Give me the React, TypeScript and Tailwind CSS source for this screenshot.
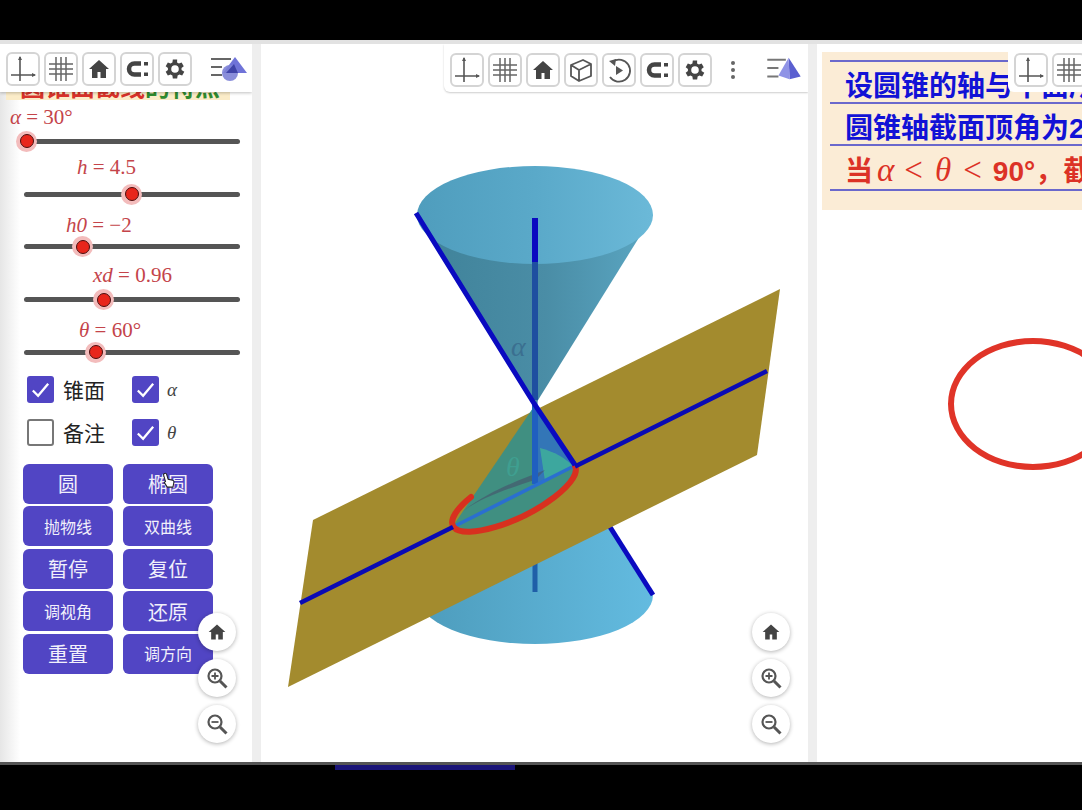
import React from "react";

const cjk = "font-['Liberation_Sans','Noto_Sans_CJK_SC',sans-serif]";
const serif = "font-['Liberation_Serif','DejaVu_Serif',serif]";

const AxesIcon = () => (
  <svg viewBox="0 0 30 30" className="w-[30px] h-[30px]" fill="none" stroke="#555" strokeWidth="1.6">
    <path d="M12 3v24M3 21h24" />
    <path d="M12 2l-2 4h4zM28 21l-4-2v4z" fill="#555" stroke="none" />
  </svg>
);

const GridIcon = () => (
  <svg viewBox="0 0 30 30" className="w-[30px] h-[30px]" fill="none" stroke="#666" strokeWidth="1.5">
    <path d="M10 3v24M15 3v24M20 3v24M3 10h24M3 15h24M3 20h24" />
  </svg>
);

const HomeIcon = ({ size = 24 }: { size?: number }) => (
  <svg viewBox="0 0 24 24" width={size} height={size} fill="#444">
    <path d="M12 3L2 12h3v9h5.500v-6h3v6H19v-9h3z" />
  </svg>
);

const MagnetIcon = () => (
  <svg viewBox="0 0 30 30" className="w-[30px] h-[30px]" fill="none" stroke="#444">
    <path d="M19 9.500h-6.500a5.500 5.500 0 000 11H19" strokeWidth="4.500" />
    <path d="M22 8h4v3.500h-4zM22 18.500h4V22h-4z" fill="#444" stroke="none" />
  </svg>
);

const GearIcon = () => (
  <svg viewBox="0 0 24 24" className="w-[26px] h-[26px]" fill="#444">
    <path d="M19.400 13a7.500 7.500 0 000-2l2.100-1.600-2-3.500-2.500 1a7.500 7.500 0 00-1.700-1L15.400 3.200h-4L11 5.900a7.500 7.500 0 00-1.700 1l-2.500-1-2 3.500L6.900 11a7.500 7.500 0 000 2l-2.100 1.600 2 3.500 2.500-1a7.500 7.500 0 001.700 1l.4 2.700h4l.4-2.700a7.500 7.500 0 001.700-1l2.500 1 2-3.500zM13.400 15.500a3.500 3.500 0 110-7 3.500 3.500 0 010 7z" transform="translate(-1.400 0)" />
  </svg>
);

const CubeIcon = () => (
  <svg viewBox="0 0 30 30" className="w-[30px] h-[30px]" fill="none" stroke="#555" strokeWidth="1.800" strokeLinejoin="round">
    <path d="M5 10l12-5 8 4v12l-12 5-8-5zM5 10l8 5v11M13 15l12-6" />
  </svg>
);

const RotateIcon = () => (
  <svg viewBox="0 0 30 30" className="w-[30px] h-[30px]" fill="none" stroke="#555" strokeWidth="1.800">
    <path d="M9 6.500A11 11 0 1 1 6 22" />
    <path d="M5 6l7-2-1 7z" fill="#555" stroke="none" />
    <path d="M12 11l7 4.500-7 4.500z" fill="#555" stroke="none" />
  </svg>
);

const ToolBtn = ({ children }: { children: React.ReactNode }) => (
  <div className="w-[34px] h-[34px] shrink-0 flex items-center justify-center bg-white rounded-md border-2 border-[#d4d4d4]">
    {children}
  </div>
);

const Shapes2D = () => (
  <svg viewBox="0 0 38 28" className="w-[38px] h-[28px]">
    <path d="M1 4h20M1 12h11M1 20h11" stroke="#666" strokeWidth="2" fill="none" />
    <path d="M25 2l12 16H13z" fill="#6f73d8" />
    <circle cx="20" cy="18" r="8" fill="#7d82d6" opacity="0.9" />
    <path d="M24 9l4 9H16z" fill="#3f43a8" />
  </svg>
);

const Pyramid = () => (
  <svg viewBox="0 0 38 28" className="w-[36px] h-[26px]">
    <path d="M1 4h20M1 13h12M1 22h12" stroke="#777" strokeWidth="2.200" fill="none" />
    <path d="M24 2l13 20-12 3z" fill="#5a5fd0" />
    <path d="M24 2L13 21l12 4z" fill="#8f93e6" />
  </svg>
);

const ZoomGlass = ({ plus }: { plus?: boolean }) => (
  <svg viewBox="0 0 24 24" className="w-[24px] h-[24px]" fill="none" stroke="#555" strokeWidth="2.200">
    <circle cx="10" cy="10" r="6.500" />
    <path d="M15 15l6.500 6.500" strokeWidth="3" />
    <path d={plus ? "M6.500 10h7M10 6.500v7" : "M6.500 10h7"} strokeWidth="1.800" />
  </svg>
);

const RoundBtn = ({ children }: { children: React.ReactNode }) => (
  <div className="w-[38px] h-[38px] rounded-full bg-white shadow-[0_1px_4px_rgba(0,0,0,0.3)] flex items-center justify-center">
    {children}
  </div>
);

const ZoomStack = ({ className }: { className: string }) => (
  <div className={`absolute flex flex-col gap-2 ${className}`}>
    <RoundBtn><HomeIcon size={20} /></RoundBtn>
    <RoundBtn><ZoomGlass plus /></RoundBtn>
    <RoundBtn><ZoomGlass /></RoundBtn>
  </div>
);

const Check = ({ on }: { on: boolean }) => (
  <div className={`w-[27px] h-[27px] shrink-0 rounded-[3px] flex items-center justify-center ${on ? "bg-[#5145c4]" : "bg-white border-2 border-[#777]"}`}>
    {on && (
      <svg viewBox="0 0 24 24" className="w-[23px] h-[23px]" fill="none" stroke="#fff" strokeWidth="2.400">
        <path d="M4 13l5.500 5.500L20 6" />
      </svg>
    )}
  </div>
);

const sliders = [
  { pre: "α", rest: " = 30°", left: "ml-[10px] mb-[9.500px]", pos: 3 },
  { pre: "h", rest: " = 4.5", left: "ml-[77px] mb-[13px]", pos: 108 },
  { pre: "h0", rest: " = −2", left: "ml-[66px] mb-[7.500px]", pos: 59 },
  { pre: "xd", rest: " = 0.96", left: "ml-[93px] mb-[10.500px]", pos: 80 },
  { pre: "θ", rest: " = 60°", left: "ml-[79px] mb-[7.500px]", pos: 72 },
];

const Slider = ({ pre, rest, left, pos }: { pre: string; rest: string; left: string; pos: number }) => (
  <div className="h-[52.750px] flex flex-col justify-end">
    <div className={`${left} ${serif} h-[24px] text-[21px] leading-[24px] text-[#c4444a] whitespace-pre`}>
      <i>{pre}</i>
      {rest}
    </div>
    <div className="ml-[24px] w-[216px] h-[5px] rounded-full bg-[#555] relative">
      <div
        className="absolute top-[-8px] w-[21px] h-[21px] -ml-[11px] rounded-full bg-[#f3bcbc] flex items-center justify-center"
        style={{ left: pos }}
      >
        <div className="w-[14px] h-[14px] rounded-full bg-[#e8261c] border border-[#4a0f0f]" />
      </div>
    </div>
  </div>
);

const buttons: [string, string][] = [
  ["圆", "text-[20px]"],
  ["椭圆", "text-[20px]"],
  ["抛物线", "text-[16px]"],
  ["双曲线", "text-[16px]"],
  ["暂停", "text-[20px]"],
  ["复位", "text-[20px]"],
  ["调视角", "text-[16px]"],
  ["还原", "text-[20px]"],
  ["重置", "text-[20px]"],
  ["调方向", "text-[16px]"],
];

const Sidebar = () => (
  <div className="relative w-[252px] shrink-0 bg-gradient-to-r from-[#e6e6e6] via-white via-[8%] to-white overflow-hidden">
    <div className="flex items-center gap-[4px] h-[52px] pt-[6px] pl-[6px] bg-white shadow-[0_1px_3px_rgba(0,0,0,0.25)] relative z-10">
      <ToolBtn><AxesIcon /></ToolBtn>
      <ToolBtn><GridIcon /></ToolBtn>
      <ToolBtn><HomeIcon /></ToolBtn>
      <ToolBtn><MagnetIcon /></ToolBtn>
      <ToolBtn><GearIcon /></ToolBtn>
      <div className="ml-[14px]"><Shapes2D /></div>
    </div>
    <div className={`${cjk} ml-[6px] w-[224px] h-[8px] bg-[#fbecc8] overflow-hidden font-bold text-[25px] leading-[25px] pl-[14px] whitespace-nowrap`}>
      <div className="-mt-[17px] text-[#d8322a]">圆锥面截线<span className="text-[#2f8a2f]">的特点</span></div>
    </div>
    <div className="mt-[-9px]">
      {sliders.map((s) => (
        <Slider key={s.pre} pre={s.pre} rest={s.rest} left={s.left} pos={s.pos} />
      ))}
    </div>
    <div className="mt-[21px] ml-[27px] grid grid-cols-[105px_100px] auto-rows-[27px] gap-y-[16px]">
      <div className="flex items-center gap-[9px]">
        <Check on />
        <span className={`${cjk} text-[21px] leading-[27px] text-[#222] mt-[2px]`}>锥面</span>
      </div>
      <div className="flex items-center gap-[8px]">
        <Check on />
        <span className={`${serif} italic text-[19px] leading-[27px] text-[#444]`}>α</span>
      </div>
      <div className="flex items-center gap-[9px]">
        <Check on={false} />
        <span className={`${cjk} text-[21px] leading-[27px] text-[#222] mt-[2px]`}>备注</span>
      </div>
      <div className="flex items-center gap-[8px]">
        <Check on />
        <span className={`${serif} italic text-[19px] leading-[27px] text-[#444]`}>θ</span>
      </div>
    </div>
    <div className="mt-[18px] ml-[23px] w-[190px] grid grid-cols-2 gap-x-[10px] gap-y-[2.500px]">
      {buttons.map(([t, size]) => (
        <div key={t} className={`${cjk} ${size} h-[40px] pt-[3px] rounded-[6px] bg-[#5145c4] text-[#f1f0fb] flex items-center justify-center`}>
          {t}
        </div>
      ))}
    </div>
    {/* hand cursor */}
    <svg viewBox="0 0 16 20" className="absolute left-[162px] top-[432px] w-[14px] h-[18px]">
      <path d="M3 1.500c1-.8 2 0 2.300 1L7 8l5 1c1.500.5 2 1.500 1.500 3l-1 5H6L2.500 11.500 4 10.500 1.800 3c-.2-.6.3-1.200 1.200-1.500z" fill="#fff" stroke="#222" strokeWidth="1.200" />
    </svg>
    <ZoomStack className="left-[198px] top-[573px]" />
  </div>
);

const Scene = () => (
  <svg viewBox="261 40 547 725" className="absolute inset-0 w-[547px] h-[725px]">
    <defs>
      <linearGradient id="rim" x1="0" x2="1" y1="0" y2="0">
        <stop offset="0" stopColor="#4f9dbd" />
        <stop offset="0.5" stopColor="#5aa9c9" />
        <stop offset="1" stopColor="#6bb9d8" />
      </linearGradient>
      <linearGradient id="cone" x1="0" x2="1" y1="0" y2="0">
        <stop offset="0" stopColor="#3f8299" />
        <stop offset="0.55" stopColor="#4a8da6" />
        <stop offset="1" stopColor="#5ba7c3" />
      </linearGradient>
      <linearGradient id="low" x1="0" x2="1" y1="0" y2="0">
        <stop offset="0" stopColor="#4d9cbc" />
        <stop offset="1" stopColor="#63bbe0" />
      </linearGradient>
    </defs>

    {/* lower cone, mostly behind the plane */}
    <path d="M535 405L653 595A118 49 0 0 1 417 595z" fill="url(#low)" />
    <path d="M535 400V592" stroke="#1f5fa8" strokeWidth="5" />
    <path d="M610 527L653 595" stroke="#0a0ac0" strokeWidth="5" />

    {/* plane */}
    <path d="M313 520L780 289L757 455L288 687z" fill="#a38b2e" />

    {/* upper cone */}
    <path d="M416 213L535 405L653 215z" fill="url(#cone)" />
    <ellipse cx="535" cy="215" rx="118" ry="49" fill="url(#rim)" />
    <path d="M535 218V262" stroke="#0a0ac0" strokeWidth="6" />
    <path d="M535 262V400" stroke="#1f4fa0" strokeWidth="6" />
    <text x="511" y="356" fontFamily="Liberation Serif, serif" fontStyle="italic" fontSize="28" fill="#3b6f90">α</text>

    {/* lower nappe in front of the plane */}
    <path d="M535 405L575 466A68 22 -26 0 1 453 526z" fill="#2f8f8f" opacity="0.85" />
    <path d="M535 405L575 466L535 486z" fill="#2f6fc4" opacity="0.8" />
    <path d="M540 448C555 452 565 458 573 466L545 481z" fill="#3fb09a" opacity="0.85" />
    <path d="M462 512C490 490 520 480 545 470L535 480C510 488 480 498 462 512z" fill="#46506a" opacity="0.6" />
    <path d="M535 405V484" stroke="#1f5fc0" strokeWidth="6" />
    <path d="M455 526L572 467" stroke="#2a6fd0" strokeWidth="3.500" />
    <text x="506" y="476" fontFamily="Liberation Serif, serif" fontStyle="italic" fontSize="28" fill="#3f9f90">θ</text>
    <path d="M471 497A68 22 -26 1 0 575 466" fill="none" stroke="#d8301f" strokeWidth="6" strokeLinecap="round" />
    <path d="M416 213L535 405L575 465" fill="none" stroke="#0a0ac0" strokeWidth="5" />
    <path d="M300 603L453 527M575 466.500L767 371" stroke="#0a0ab4" strokeWidth="4.500" />
  </svg>
);

const Center = () => (
  <div className="relative w-[547px] shrink-0 bg-white overflow-hidden">
    <Scene />
    <div className="absolute top-[4px] left-[183px] right-0 h-[48px] pl-[6px] pt-[9px] flex gap-[4px] bg-white rounded-bl-md shadow-[0_1px_2px_rgba(0,0,0,0.2)]">
      <ToolBtn><AxesIcon /></ToolBtn>
      <ToolBtn><GridIcon /></ToolBtn>
      <ToolBtn><HomeIcon /></ToolBtn>
      <ToolBtn><CubeIcon /></ToolBtn>
      <ToolBtn><RotateIcon /></ToolBtn>
      <ToolBtn><MagnetIcon /></ToolBtn>
      <ToolBtn><GearIcon /></ToolBtn>
      <div className="ml-[15px] mt-[8px] flex flex-col gap-[3px]">
        <div className="w-[4px] h-[4px] rounded-full bg-[#666]" />
        <div className="w-[4px] h-[4px] rounded-full bg-[#666]" />
        <div className="w-[4px] h-[4px] rounded-full bg-[#666]" />
      </div>
      <div className="ml-[27px] mt-[3px]"><Pyramid /></div>
    </div>
    <ZoomStack className="left-[491px] top-[573px]" />
  </div>
);

const Gutter = () => <div className="w-[9px] shrink-0 bg-[#eeeeee]" />;

const Right = () => (
  <div className="relative flex-1 bg-white overflow-hidden">
    <div className={`${cjk} ml-[5px] mt-[12px] h-[158px] w-[400px] bg-[#fbecd6] pt-[8px] pl-[8px] font-bold text-[28px] whitespace-nowrap`}>
      <div className="h-[42px] w-[392px] border-t-2 border-[#6a68cc] pl-[15px] leading-[49px] text-[#1212d6]">设圆锥的轴与平面所成角为</div>
      <div className="h-[42px] w-[392px] border-t-2 border-[#6a68cc] pl-[15px] leading-[49px] text-[#1212d6]">圆锥轴截面顶角为2α</div>
      <div className="h-[47px] w-[392px] border-y-2 border-[#6a68cc] pl-[15px] leading-[49px] text-[#dc3226]">
        当<span className={`${serif} italic font-normal text-[33px] ml-[4px]`}>α</span>
        <span className={`${serif} font-normal text-[33px] ml-[10px]`}>&lt;</span>
        <span className={`${serif} italic font-normal text-[33px] ml-[12px]`}>θ</span>
        <span className={`${serif} font-normal text-[33px] ml-[12px]`}>&lt;</span>
        <span className="ml-[11px]">90°，截面</span>
      </div>
    </div>
    <div className="absolute top-[4px] left-[191px] w-[80px] h-[48px] pl-[6px] pt-[9px] flex gap-[4px] bg-white rounded-bl-md">
      <ToolBtn><AxesIcon /></ToolBtn>
      <ToolBtn><GridIcon /></ToolBtn>
    </div>
    <div className="absolute left-[131px] top-[298px] w-[170px] h-[132px] rounded-[50%] border-[6px] border-[#e03428]" />
  </div>
);

export default function App() {
  return (
    <div className="w-[1082px] h-[810px] bg-black flex flex-col overflow-hidden">
      <div className="h-[40px] shrink-0 bg-black" />
      <div className="relative h-[725px] shrink-0 flex bg-[#eeeeee]">
        <Sidebar />
        <Gutter />
        <Center />
        <Gutter />
        <Right />
        <div className="absolute top-0 inset-x-0 h-[4px] bg-[#e2e2e2] z-20" />
        <div className="absolute bottom-0 inset-x-0 h-[3px] bg-[#555] z-20" />
      </div>
      <div className="h-[5px] ml-[335px] w-[180px] bg-[#1a1478]" />
    </div>
  );
}
